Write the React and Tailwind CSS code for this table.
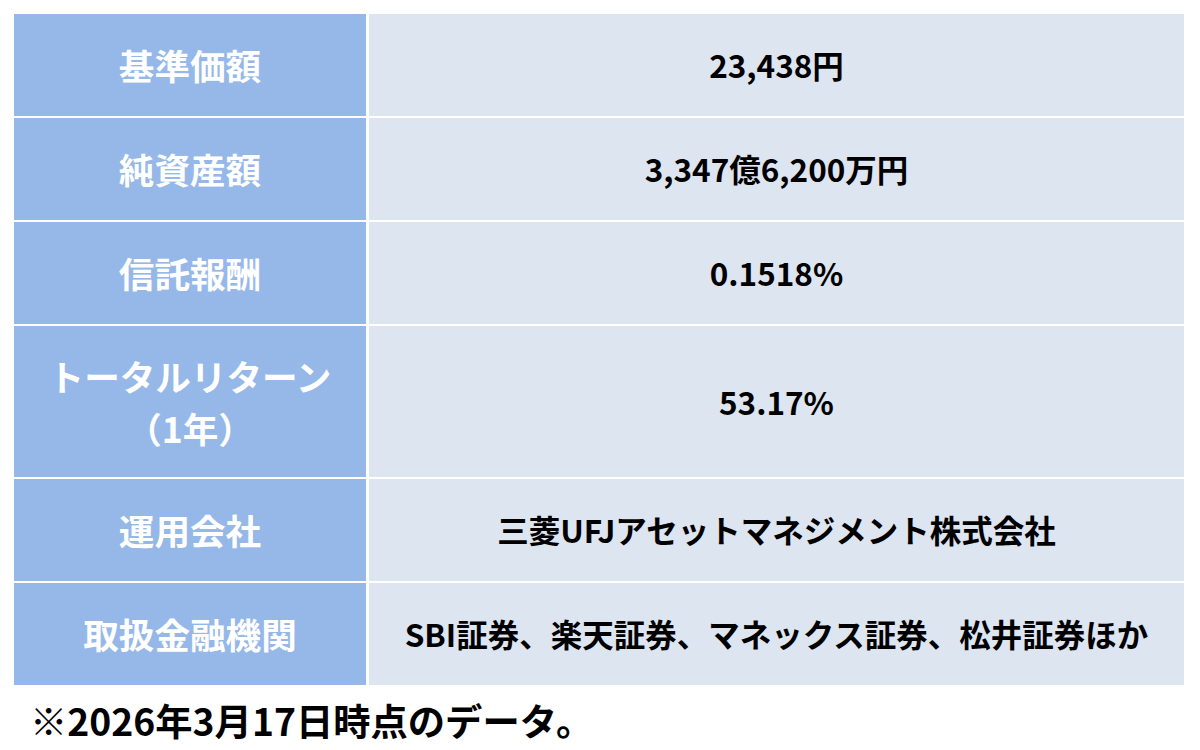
const ROWS = [
  { label: ['基準価額'], value: '23,438円', h: 'h-[102px]' },
  { label: ['純資産額'], value: '3,347億6,200万円', h: 'h-[102px]' },
  { label: ['信託報酬'], value: '0.1518%', h: 'h-[102px]' },
  { label: ['トータルリターン', '（1年）'], value: '53.17%', h: 'h-[151px]' },
  { label: ['運用会社'], value: '三菱UFJアセットマネジメント株式会社', h: 'h-[102px]' },
  { label: ['取扱金融機関'], value: 'SBI証券、楽天証券、マネックス証券、松井証券ほか', h: 'h-[102px]' },
]

export default function App() {
  return (
    <div
      className="w-[1200px] h-[750px] bg-white pt-[14px] pl-[14px] pr-[16px] overflow-hidden"
      style={{ fontFamily: '"Noto Sans CJK JP", "Noto Sans", sans-serif' }}
    >
      <div className="grid grid-cols-[352px_1fr] gap-x-[3px] gap-y-[2px]">
        {ROWS.map((r) => (
          <div key={r.value} className="contents">
            <div className={`${r.h} bg-[#95b8e8] flex flex-col items-center justify-center text-white font-bold text-[35.6px] leading-[52px]`}>
              {r.label.map((l) => (
                <span key={l}>{l}</span>
              ))}
            </div>
            <div className={`${r.h} bg-[#dde5f0] flex items-center justify-center text-black font-bold text-[31.5px]`}>
              {r.value}
            </div>
          </div>
        ))}
      </div>
      <p className="mt-[10px] pl-[16px] text-black font-bold text-[37.3px] leading-[50px]">
        ※2026年3月17日時点のデータ。
      </p>
    </div>
  )
}
